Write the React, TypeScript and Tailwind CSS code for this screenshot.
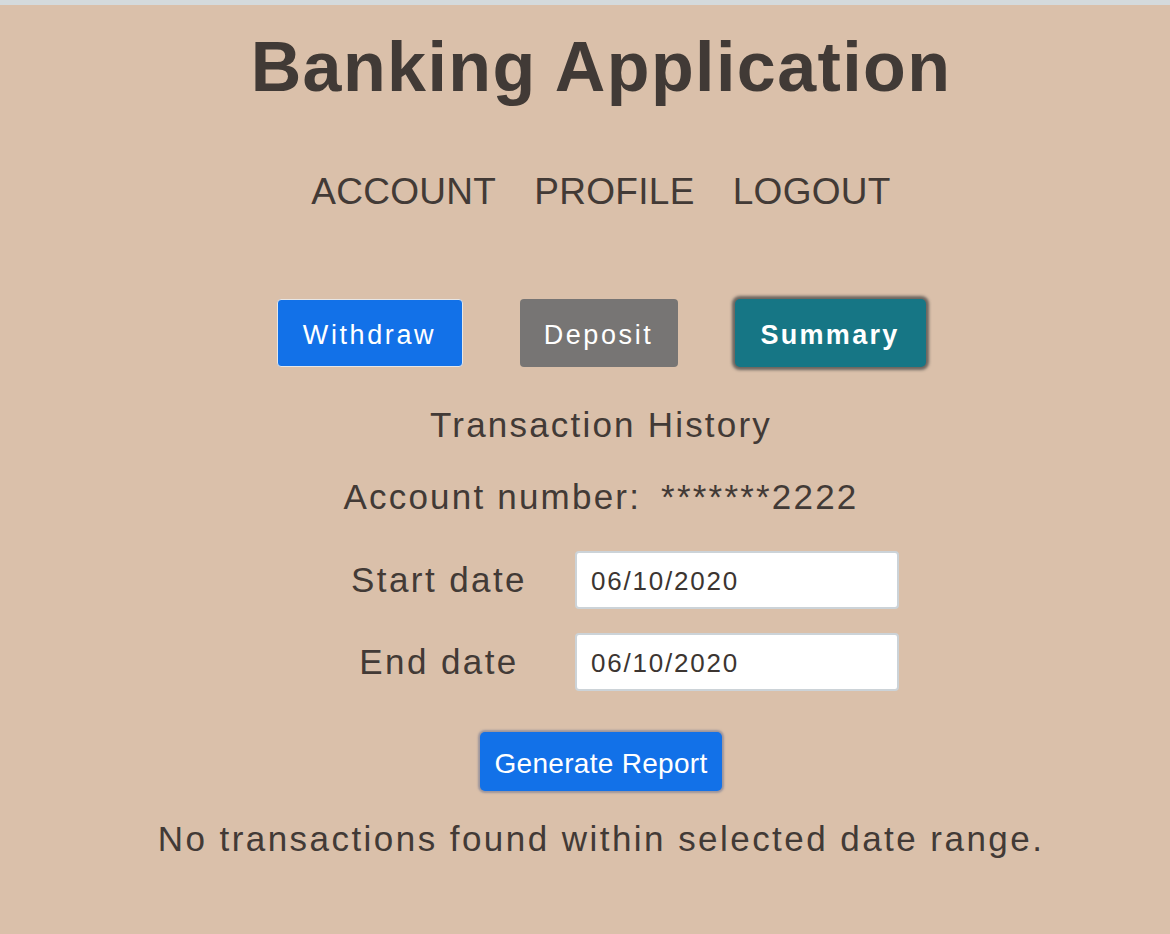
import React, { useState } from 'react';

const font = "font-['Liberation_Sans',Arial,sans-serif]";

const App = () => {
  const [start, setStart] = useState('06/10/2020');
  const [end, setEnd] = useState('06/10/2020');

  return (
    <div className={`min-h-[934px] bg-[#dac0aa] text-[#423a36] ${font}`}>
      <div className="h-[5px] bg-[#d4dadc]" />

      <div className="flex flex-col items-center pl-[32px]">
        {/* Title */}
        <h1 className="mt-[27px] text-[70px] leading-none font-bold tracking-[1.4px] text-[#413a36]">
          Banking Application
        </h1>

        {/* Nav */}
        <nav className="mt-[71px] flex items-center gap-[38px] text-[37px] leading-none tracking-[0.3px]">
          <a href="#account">ACCOUNT</a>
          <a href="#profile">PROFILE</a>
          <a href="#logout">LOGOUT</a>
        </nav>

        {/* Action buttons */}
        <div className="mt-[89px] flex items-center gap-[57px] text-[27px] tracking-[2.6px] text-white">
          <button className="w-[186px] h-[68px] pt-[5px] rounded-[4px] bg-[#1271e8] border border-[#e6e6e6]">
            Withdraw
          </button>
          <button className="w-[158px] h-[68px] pt-[5px] rounded-[4px] bg-[#777574]">
            Deposit
          </button>
          <button className="w-[191px] h-[68px] pt-[5px] rounded-[5px] bg-[#167685] font-bold tracking-[2.3px] shadow-[0_0_3px_3px_rgba(70,70,70,0.75)]">
            Summary
          </button>
        </div>

        <h2 className="mt-[40px] text-[35px] leading-none tracking-[2.2px]">Transaction History</h2>

        <div className="mt-[37px] flex items-center gap-[20px] text-[35px] leading-none tracking-[2.2px]">
          <span>Account number:</span>
          <span>*******2222</span>
        </div>

        {/* Date range */}
        <div className="mt-[37px] flex flex-col gap-[24px] pl-[48px]">
          <div className="flex items-center gap-[48px]">
            <label className="w-[176px] text-center text-[35px] tracking-[2.4px]">Start date</label>
            <input
              value={start}
              onChange={(e) => setStart(e.target.value)}
              className="w-[324px] h-[58px] rounded-[4px] bg-white border-2 border-[#ccd3d8] px-[14px] pt-[2px] text-[26px] tracking-[1.8px] text-[#3c3531] outline-none"
            />
          </div>
          <div className="flex items-center gap-[48px]">
            <label className="w-[176px] text-center text-[35px] tracking-[2.4px]">End date</label>
            <input
              value={end}
              onChange={(e) => setEnd(e.target.value)}
              className="w-[324px] h-[58px] rounded-[4px] bg-white border-2 border-[#ccd3d8] px-[14px] pt-[2px] text-[26px] tracking-[1.8px] text-[#3c3531] outline-none"
            />
          </div>
        </div>

        <button className="mt-[41px] w-[242px] h-[59px] pt-[4px] rounded-[5px] bg-[#1271e8] text-white text-[28px] tracking-[0.3px] shadow-[0_0_2px_2px_rgba(130,130,150,0.7)]">
          Generate Report
        </button>

        <p className="mt-[30px] text-[35px] leading-none tracking-[2.45px]">
          No transactions found within selected date range.
        </p>
      </div>
    </div>
  );
};

export default App;
